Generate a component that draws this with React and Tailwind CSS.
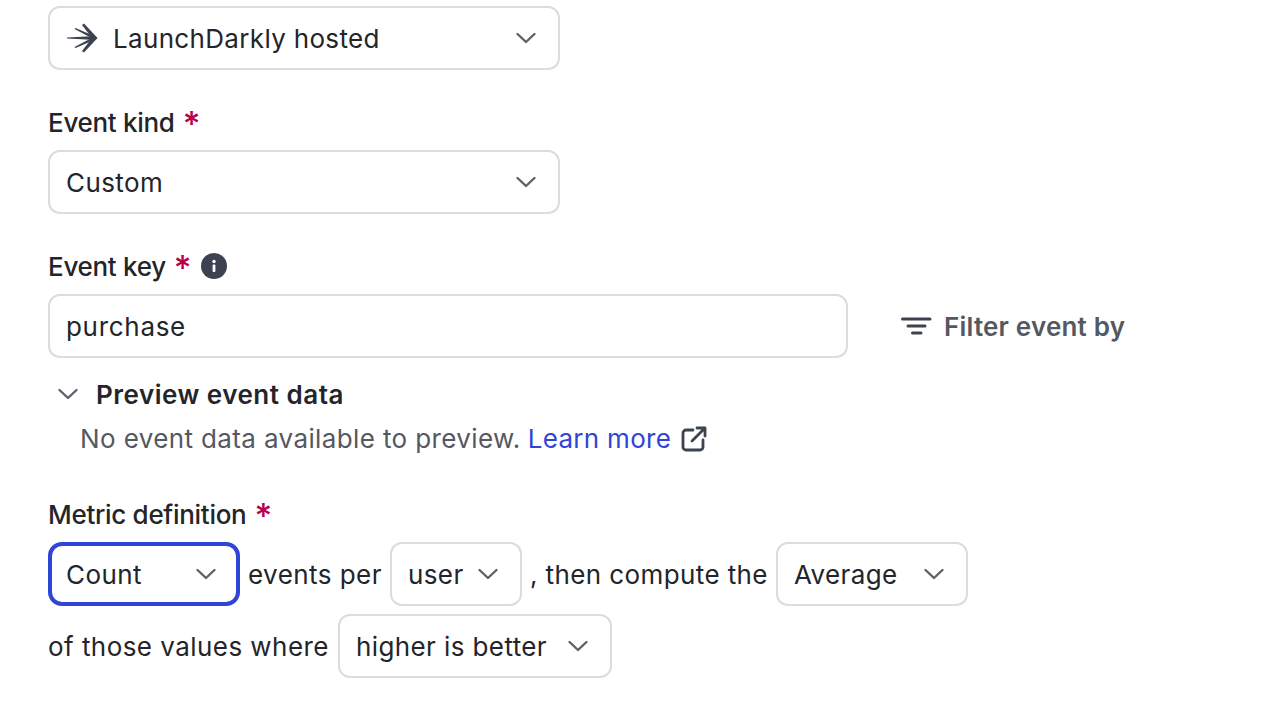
import React from "react";

const Chevron = ({ className = "" }) => (
  <svg width="24" height="24" viewBox="0 0 24 24" fill="none" stroke="#5c6068" strokeWidth="2.4" strokeLinecap="round" strokeLinejoin="round" className={className}>
    <path d="M3.5 8 L12 16 L20.5 8" />
  </svg>
);

const Star = () => <span className="ml-[8px] h-[28px] -translate-y-[2px] text-[#b8004a] text-[34px] font-medium leading-[36px]">*</span>;

const Label = ({ children, extra }) => (
  <div className="flex items-center h-[40px] text-[26px] font-medium tracking-[-0.3px] text-[#23252a]">
    <span>{children}</span>
    <Star />
    {extra}
  </div>
);

const Select = ({ children, className = "", icon, focus }) => (
  <div className={`flex items-center justify-between h-[64px] rounded-[12px] bg-white text-[#23252a] ${focus ? "border-[4px] border-[#2f44d8] rounded-[14px] pl-[14px] pr-[18px]" : "border-2 border-[#d9dce2] pl-[16px] pr-[20px]"} ${className}`}>
    <span className="flex items-center">
      {icon}
      <span className="pt-[1px]">{children}</span>
    </span>
    <Chevron />
  </div>
);

export default function App() {
  return (
    <div className="w-[1276px] h-[708px] overflow-hidden bg-white pl-[48px] pt-[6px] text-[26px] tracking-[0.4px] text-[#23252a]" style={{ fontFamily: "Inter, sans-serif" }}>
      <Select
        className="w-[512px] tracking-[0.33px]"
        icon={
          <svg width="34" height="34" viewBox="0 0 34 34" className="mr-[14px] -ml-[1px]" fill="#3c4250">
            <path d="M2 16.5 L26 15.2 L32 17 L26 18.8 L2 17.5 Z" />
            <path d="M17 4 L19 2.5 L32.5 17 L28 18.2 Z" />
            <path d="M17 30 L19 31.5 L32.5 17 L28 15.8 Z" />
            <path d="M9.5 8 L10.5 7 L31.5 16 L28.5 18 Z" />
            <path d="M9.5 26 L10.5 27 L31.5 18 L28.5 16 Z" />
          </svg>
        }
      >
        LaunchDarkly hosted
      </Select>
      <div className="mt-[32px]"><Label>Event kind</Label></div>
      <div className="mt-[8px]"><Select className="w-[512px]">Custom</Select></div>
      <div className="mt-[32px]">
        <Label extra={
          <span className="ml-[10px] flex items-center justify-center w-[26px] h-[26px] rounded-full bg-[#3c4250]">
            <svg width="26" height="26" viewBox="0 0 26 26" fill="white">
              <rect x="11.6" y="11.5" width="2.8" height="7.5" rx="1" />
              <circle cx="13" cy="8.5" r="1.7" />
            </svg>
          </span>
        }>Event key</Label>
      </div>
      <div className="mt-[8px] flex items-center">
        <div className="w-[800px] h-[64px] rounded-[12px] border-2 border-[#d9dce2] flex items-center pl-[16px] pt-[1px] tracking-[0.7px]">purchase</div>
        <div className="ml-[52px] flex items-center gap-[12px] text-[#545861] text-[26px] font-semibold tracking-[0.2px]">
          <svg width="32" height="32" viewBox="0 0 32 32" fill="none" stroke="#3c4250" strokeWidth="3" strokeLinecap="round">
            <path d="M2.5 9 H30 M8 16 H25 M12.5 23 H21" />
          </svg>
          <span>Filter event by</span>
        </div>
      </div>
      <div className="mt-[16px] ml-[8px] flex items-center h-[40px]">
        <Chevron />
        <span className="ml-[16px] text-[26px] font-semibold tracking-[0.5px]">Preview event data</span>
      </div>
      <div className="mt-[4px] ml-[32px] flex items-center h-[40px] pt-[1px] text-[#545861] tracking-[0.38px]">
        <span>No event data available to preview.</span>
        <a className="ml-[7px] text-[#2f44d8] tracking-[0.3px]">Learn more</a>
        <svg width="28" height="28" viewBox="0 0 28 28" fill="none" stroke="#3c4250" strokeWidth="2.8" strokeLinecap="round" strokeLinejoin="round" className="ml-[9px]">
          <path d="M13 5 H6 a3 3 0 0 0 -3 3 V22 a3 3 0 0 0 3 3 H20 a3 3 0 0 0 3 -3 V15 M12 16 L25 3 M17 3 H25 V11" />
        </svg>
      </div>
      <div className="mt-[36px]"><Label>Metric definition</Label></div>
      <div className="mt-[8px] flex items-center">
        <Select focus className="w-[192px]">Count</Select>
        <span className="mx-[8px] pt-[1px] tracking-[0.45px]">events per</span>
        <Select className="w-[132px]">user</Select>
        <span className="mx-[8px] pt-[1px] tracking-[0.4px]">, then compute the</span>
        <Select className="w-[192px]">Average</Select>
      </div>
      <div className="mt-[8px] flex items-center">
        <span className="mr-[9px] pt-[1px] tracking-[0.45px]">of those values where</span>
        <Select className="w-[274px]">higher is better</Select>
      </div>
    </div>
  );
}
